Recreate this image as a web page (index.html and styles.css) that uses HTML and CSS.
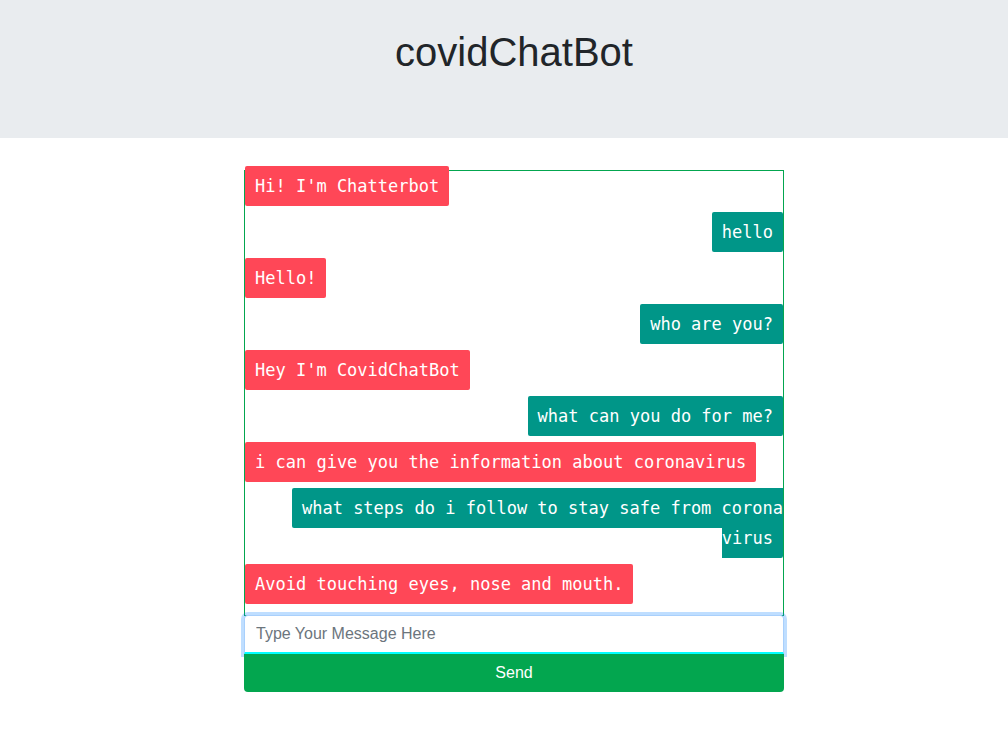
FILE: index.html
```html
<!DOCTYPE html>
<html lang="en">
<head>
<meta charset="utf-8">
<title>covidChatBot</title>
<link rel="stylesheet" href="styles.css">
</head>
<body>
<header class="jumbotron">
  <h1 class="title">covidChatBot</h1>
</header>
<main class="wrap">
  <div class="chat">
    <div class="chatbox">
      <p class="bot-text"><span>Hi! I'm Chatterbot</span></p>
      <p class="user-text"><span>hello</span></p>
      <p class="bot-text"><span>Hello!</span></p>
      <p class="user-text"><span>who are you?</span></p>
      <p class="bot-text"><span>Hey I'm CovidChatBot</span></p>
      <p class="user-text"><span>what can you do for me?</span></p>
      <p class="bot-text"><span>i can give you the information about coronavirus</span></p>
      <p class="user-text"><span>what steps do i follow to stay safe from corona virus</span></p>
      <p class="bot-text"><span>Avoid touching eyes, nose and mouth.</span></p>
    </div>
    <div class="input-area">
      <input class="msg-input" type="text" placeholder="Type Your Message Here" autofocus>
      <button class="send-btn" type="button">Send</button>
    </div>
  </div>
</main>
</body>
</html>
```
FILE: styles.css
```css
* { box-sizing: border-box; }

body {
  margin: 0;
  font-family: "Liberation Sans", Arial, sans-serif;
  font-size: 16px;
  color: #212529;
  background: #ffffff;
}

.jumbotron {
  background: #e9ecef;
  height: 138px;
  padding: 28px 0 0 20px;
  margin-bottom: 32px;
}

.title {
  margin: 0;
  font-size: 40px;
  line-height: 48px;
  font-weight: 400;
  text-align: center;
  color: #212529;
}

.wrap {
  padding-left: 20px;
}

.chat {
  width: 540px;
  margin: 0 auto;
}

.chatbox {
  border: 1px solid #03a64f;
}

.bot-text,
.user-text {
  margin: 0 0 16px 0;
  font-family: "DejaVu Sans Mono", monospace;
  font-size: 17px;
  line-height: 30px;
  color: #ffffff;
}

.bot-text { text-align: left; }
.user-text { text-align: right; }

.bot-text span,
.user-text span {
  padding: 10px;
  border-radius: 2px;
}

.bot-text span { background: #ff4757; }
.user-text span { background: #009688; }

.input-area {
  display: flex;
  flex-direction: column;
  margin-top: -1px;
}

.msg-input {
  display: block;
  width: 100%;
  height: 39px;
  padding: 6px 11px;
  font-family: "Liberation Sans", Arial, sans-serif;
  font-size: 16px;
  color: #495057;
  background: #ffffff;
  border: 1px solid #a9d0fc;
  border-bottom: 2px solid #00ffff;
  border-radius: 4px 4px 0 0;
  box-shadow: 0 0 0 3px rgba(0, 123, 255, 0.25);
  outline: none;
}

.msg-input::placeholder {
  color: #6c757d;
  opacity: 1;
}

.send-btn {
  display: block;
  width: 100%;
  height: 38px;
  padding: 0;
  font-family: "Liberation Sans", Arial, sans-serif;
  font-size: 16px;
  color: #ffffff;
  background: #03a64f;
  border: none;
  border-radius: 0 0 4px 4px;
  position: relative;
}
```
